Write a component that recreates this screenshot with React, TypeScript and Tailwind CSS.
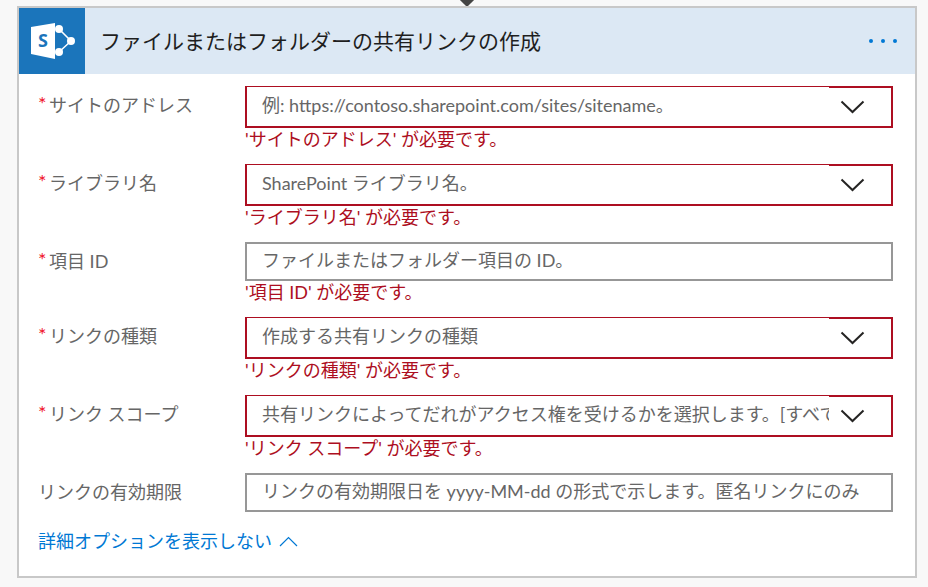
const jp = "font-['Lato','Noto_Sans_CJK_JP',sans-serif] [text-spacing-trim:space-all]"

type FieldProps = {
  label: string
  placeholder: string
  required?: boolean
  dropdown?: boolean
  invalid?: boolean
}

function Field({ label, placeholder, required, dropdown, invalid }: FieldProps) {
  return (
    <div className="flex mb-[14px]">
      <div className="flex w-[226px] pl-[19px] pt-[5px] text-[18px] leading-[28px] text-[#666666] whitespace-nowrap">
        {required && <span className="w-[11px] text-[20px] leading-[24px] text-[#f0142d]">*</span>}
        {label}
      </div>
      <div className="w-[648px]">
        {dropdown ? (
          <div className="relative flex h-[42px] border-2 border-[#ad0e21] border-t-[1px]">
            <div className="flex-1 min-w-0 overflow-hidden whitespace-nowrap pl-[15px] text-[18px] leading-[36px] text-[#666666]">
              {placeholder}
            </div>
            <div className="flex w-[62px] shrink-0 items-center pl-[11px]">
              <svg width="25" height="14" viewBox="0 0 25 14" fill="none" stroke="#252423" strokeWidth="2">
                <path d="M1.5 1.5 L12.5 12 L23.5 1.5" />
              </svg>
            </div>
            <div className="absolute right-[-2px] top-[-1px] h-[2px] w-[64px] bg-[#ad0e21]" />
          </div>
        ) : (
          <div className="h-[39px] overflow-hidden whitespace-nowrap border-2 border-[#979797] pl-[15px] text-[18px] leading-[33px] text-[#666666]">
            {placeholder}
          </div>
        )}
        {invalid && (
          <div className="h-[22px] text-[18px] leading-[22px] text-[#ad0e21] whitespace-nowrap">
            '{label}' が必要です。
          </div>
        )}
      </div>
    </div>
  )
}

export default function App() {
  return (
    <div className={`relative h-[587px] w-[928px] overflow-hidden bg-[#f8f8f8] ${jp}`}>
      <div className="absolute left-[462px] top-[-5px] h-[10px] w-[10px] rotate-45 bg-[#444444]" />
      <div className="absolute left-[17px] top-[6px] h-[572px] w-[900px] border-2 border-[#c8c8c8] bg-white">
        <div className="flex h-[66px] items-center bg-[#dce8f4]">
          <div className="h-[66px] w-[66px] bg-[#1b75bb]">
            <svg width="66" height="66" viewBox="0 0 66 66" fill="none">
              <path d="M12 19 L36 15 V51 L12 46 Z" fill="#ffffff" />
              <text x="24" y="39" textAnchor="middle" fontSize="18" fontWeight="700" fill="#1b75bb" fontFamily="Open Sans, sans-serif">S</text>
              <path d="M40 21 L52 33 L40 44" stroke="#ffffff" strokeWidth="1.5" />
              <circle cx="40" cy="21" r="4" fill="#ffffff" />
              <circle cx="52" cy="33" r="4" fill="#ffffff" />
              <circle cx="40" cy="44" r="4" fill="#ffffff" />
            </svg>
          </div>
          <div className="ml-[15px] flex-1 text-[21px] text-[#1f1f1f]">ファイルまたはフォルダーの共有リンクの作成</div>
          <div className="mr-[18px] flex gap-[8px]">
            <span className="h-[4px] w-[4px] rounded-full bg-[#0078d4]" />
            <span className="h-[4px] w-[4px] rounded-full bg-[#0078d4]" />
            <span className="h-[4px] w-[4px] rounded-full bg-[#0078d4]" />
          </div>
        </div>
        <div className="pt-[12px]">
          <Field label="サイトのアドレス" placeholder="例: https://contoso.sharepoint.com/sites/sitename。" required dropdown invalid />
          <Field label="ライブラリ名" placeholder="SharePoint ライブラリ名。" required dropdown invalid />
          <Field label="項目 ID" placeholder="ファイルまたはフォルダー項目の ID。" required invalid />
          <Field label="リンクの種類" placeholder="作成する共有リンクの種類" required dropdown invalid />
          <Field label="リンク スコープ" placeholder="共有リンクによってだれがアクセス権を受けるかを選択します。[すべてのユーザー]" required dropdown invalid />
          <Field label="リンクの有効期限" placeholder="リンクの有効期限日を yyyy-MM-dd の形式で示します。匿名リンクにのみ" />
        </div>
        <div className="flex items-center pl-[19px] pt-[1px] text-[18px] leading-[28px] text-[#0078d4]">
          詳細オプションを表示しない
          <svg width="19" height="11" viewBox="0 0 19 11" fill="none" stroke="#0078d4" strokeWidth="1.2" className="ml-[7px]">
            <path d="M1 10 L9.5 1.5 L18 10" />
          </svg>
        </div>
      </div>
    </div>
  )
}
